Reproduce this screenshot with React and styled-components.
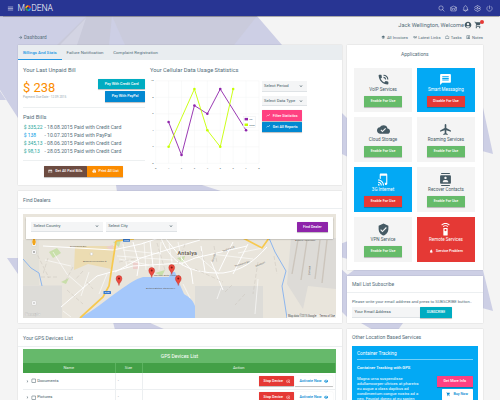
import React from "react";
import styled, { createGlobalStyle } from "styled-components";
import {
  MdMenu, MdPhoneInTalk, MdMessage, MdCloudDone, MdAirplanemodeActive, MdTapAndPlay,
  MdContacts, MdVerifiedUser, MdSettingsRemote, MdAccountCircle, MdShoppingCart,
  MdArrowForward, MdKeyboardArrowDown, MdKeyboardArrowRight, MdCheckBoxOutlineBlank,
  MdPrint, MdCreditCard, MdShowChart, MdLayers, MdLink, MdWorkOutline, MdListAlt,
  MdHighlightOff, MdRemoveRedEye, MdNotifications,
} from "react-icons/md";
import {
  IoSearchOutline, IoMailOpenOutline, IoNotificationsOutline, IoSettingsOutline, IoPowerOutline,
} from "react-icons/io5";

const Global = createGlobalStyle`
  * { box-sizing: border-box; }
  html, body { margin: 0; width: 500px; height: 400px; overflow: hidden; background: #f4f4f4; }
  body { font-family: Roboto, "Liberation Sans", sans-serif; color: #546e7a; }
  svg { display: block; flex: none; }
`;

const Page = styled.div`
  position: relative;
  width: 500px;
  height: 400px;
  overflow: hidden;
  isolation: isolate;
`;
const Backdrop = styled.svg`
  position: absolute;
  inset: 0;
  z-index: -1;
`;

const Label = styled.span`
  display: block;
  white-space: nowrap;
  font-size: ${(p) => p.$size}px;
  line-height: ${(p) => p.$line || 8}px;
  font-weight: ${(p) => p.$weight || 400};
  color: ${(p) => p.$color || "inherit"};
`;

/* Header */
const TopBar = styled.header`
  display: flex;
  align-items: center;
  justify-content: space-between;
  height: 16px;
  padding: 0 7px 0 7px;
  background: #283593;
  color: #fff;
  box-shadow: 0 0.5px 1px rgba(0, 0, 0, 0.3);
`;
const Brand = styled.div`
  display: flex;
  align-items: center;
  gap: 3.6px;
`;
const Wordmark = styled.div`
  display: flex;
  align-items: center;
  font-size: 8.6px;
  line-height: 10px;
  font-weight: 300;
  letter-spacing: -0.1px;
`;
const TopIcons = styled.div`
  display: flex;
  gap: 5px;
`;
const UserArea = styled.div`
  display: flex;
  flex-direction: column;
  align-items: flex-end;
  height: 29px;
  padding: 4px 17px 0 18px;
`;
const UserRow = styled.div`
  display: flex;
  align-items: center;
  height: 10px;
  color: #455a64;
`;
const CartWrap = styled.div`
  position: relative;
  margin-left: 2px;
  padding-right: 1px;
`;
const Badge = styled.i`
  position: absolute;
  top: -1.5px;
  right: -1px;
  width: 4px;
  height: 4px;
  border-radius: 50%;
  background: #e53935;
`;
const CrumbRow = styled.div`
  display: flex;
  align-self: stretch;
  align-items: center;
  justify-content: space-between;
  height: 8px;
  margin-top: 3.5px;
`;
const Links = styled.nav`
  display: flex;
  gap: 4.8px;
`;
const IconText = styled.div`
  display: flex;
  align-items: center;
  gap: 1px;
`;

/* Columns and cards */
const Columns = styled.main`
  display: grid;
  grid-template-columns: 323.5px 135.5px;
  gap: 5.5px;
  padding-left: 18px;
`;
const Column = styled.div`
  display: flex;
  flex-direction: column;
  gap: ${(p) => p.$gap || 6}px;
`;
const Card = styled.section`
  height: ${(p) => p.$h}px;
  background: #fff;
  box-shadow: 0 0.4px 1.2px rgba(0, 0, 0, 0.2);
  overflow: hidden;
`;
const CardTitle = styled.div`
  height: 17.5px;
  padding: 4.5px 5px 0;
  border-bottom: 0.5px solid ${(p) => (p.$plain ? "transparent" : "#eceff1")};
`;
const Tabs = styled.div`
  display: flex;
  height: 15px;
  background: #e9edf0;
`;
const Tab = styled.div`
  padding: 3.8px 4.9px 0;
  border-bottom: 1px solid ${(p) => (p.$active ? "#2196e3" : "transparent")};
`;
const BillBody = styled.div`
  display: grid;
  grid-template-columns: 122px 112px 46px;
  padding: 5.5px 5px 0;
`;
const BillSummary = styled.div`
  display: flex;
  justify-content: space-between;
  height: 29.3px;
`;
const Amount = styled.div`
  padding-top: 6.6px;
`;
const Between = styled.div`
  display: flex;
  justify-content: space-between;
`;
const ButtonStack = styled.div`
  display: flex;
  flex-direction: column;
  align-items: flex-end;
  gap: ${(p) => p.$gap}px;
  padding-top: ${(p) => p.$top || 0}px;
`;
const Button = styled.button`
  display: flex;
  flex: none;
  align-items: center;
  justify-content: center;
  gap: 2.5px;
  width: ${(p) => p.$w}px;
  height: ${(p) => p.$h || 10.8}px;
  padding: 0;
  border: 0;
  border-radius: 0.5px;
  background: ${(p) => p.$bg};
  color: ${(p) => p.$fg || "#fff"};
  font: 500 ${(p) => p.$size || 3.7}px/6px Roboto, sans-serif;
  white-space: nowrap;
  box-shadow: ${(p) => (p.$flat ? "none" : "0 0.4px 0.8px rgba(0,0,0,.25)")};
`;
const Rule = styled.div`
  height: 1px;
  margin: ${(p) => p.$m};
  background: ${(p) => p.$c || "#edf0f1"};
`;
const BillList = styled.div`
  padding-top: 2px;
`;
const BillRow = styled.div`
  display: grid;
  grid-template-columns: 20.7px 1fr;
  height: 8.05px;
  padding-left: 0.7px;
`;
const BillActions = styled.div`
  display: flex;
  gap: 0.6px;
  padding: 4.5px 0 0 21px;
`;
const ChartColumn = styled.div`
  display: flex;
  flex-direction: column;
  gap: 3.6px;
  padding-left: 5px;
`;
const Filters = styled.div`
  display: flex;
  flex-direction: column;
  padding: 15.5px 0 0 4.6px;
`;
const FilterActions = styled.div`
  display: flex;
  flex-direction: column;
  gap: 0.6px;
`;
const Select = styled.div`
  display: flex;
  align-items: center;
  justify-content: space-between;
  width: ${(p) => p.$w}px;
  height: 10.8px;
  padding: 0 3px 0 2.5px;
  margin-bottom: ${(p) => p.$mb || 0}px;
  background: #f4f5f6;
  border-bottom: 0.5px solid #dfe3e6;
  color: #455a64;
`;

/* Map */
const MapFrame = styled.div`
  position: relative;
  width: 313px;
  height: 104px;
  margin: 5.5px 0 0 5px;
`;
const MapSearch = styled.div`
  position: absolute;
  top: 2.5px;
  left: 3px;
  display: flex;
  gap: 3px;
  width: 307px;
  height: 22px;
  padding: 5px 5px 0;
  background: #fff;
  box-shadow: 0 0.5px 1.5px rgba(0, 0, 0, 0.35);
`;
const PushRight = styled.div`
  margin-left: auto;
`;
const CityName = styled.text`
  font-size: 5.4px;
  font-weight: 700;
  letter-spacing: 0.2px;
  fill: #6b6458;
  stroke: #f4f1ea;
  stroke-width: 0.8px;
  paint-order: stroke;
`;

/* Devices table */
const Table = styled.div`
  width: 313px;
  margin: 2.7px 0 0 5px;
`;
const TableTitle = styled.div`
  display: flex;
  justify-content: center;
  height: 13.5px;
  padding-top: 2.4px;
  background: #66b96b;
  color: #fff;
`;
const TableRow = styled.div`
  display: grid;
  grid-template-columns: 92.5px 27px 1fr;
  height: ${(p) => (p.$head ? 10.5 : 16.5)}px;
  background: ${(p) => (p.$head ? "#43a047" : "#fff")};
  border-bottom: ${(p) => (p.$head ? "0" : "0.5px solid #eceff1")};
  color: ${(p) => (p.$head ? "#e8f5e9" : "#455a64")};
`;
const Cell = styled.div`
  display: flex;
  align-items: center;
  justify-content: ${(p) => p.$justify || "flex-start"};
  gap: 0.8px;
  padding: 0 2.3px;
  border-right: 0.5px solid ${(p) => (p.$head ? "#5cb360" : "#eceff1")};
`;

/* Applications */
const AppsTitle = styled.div`
  display: flex;
  justify-content: center;
  height: 22.5px;
  padding-top: 4.8px;
`;
const AppGrid = styled.div`
  display: grid;
  grid-template-columns: 57.5px 57.5px;
  grid-auto-rows: 44.6px;
  gap: 5.4px 5.4px;
  padding-left: 7.3px;
`;
const Tile = styled.div`
  display: flex;
  flex-direction: column;
  align-items: center;
  padding-top: 5.4px;
  background: ${(p) => p.$bg || "#f4f4f4"};
  color: ${(p) => (p.$bg ? "#fff" : "#455a64")};
`;
const TileName = styled.div`
  height: 10.2px;
  padding-top: 0.5px;
`;
const SubscribeBody = styled.div`
  padding: 4.6px 5px;
`;
const SubscribeRow = styled.div`
  display: flex;
  gap: 0.5px;
  padding-top: 1.2px;
`;
const TrackBox = styled.div`
  width: 125.5px;
  height: 80px;
  margin: -0.6px 0 0 5px;
  padding: 4.4px 5px;
  background: #03a9f4;
  color: #fff;
`;
const TrackText = styled.p`
  margin: 0;
  padding-top: 3.6px;
  font-size: 4.1px;
  line-height: 5px;
  white-space: nowrap;
`;

const slate = "#455a64";

function Background() {
  return (
    <Backdrop width="500" height="400" viewBox="0 0 500 400">
      <path d="M0 16H257L282 45V60H18V118L0 90Z" fill="#cdcfe5" />
      <path d="M87 16H112L109 45H57Z" fill="#c9cada" />
      <path d="M112 16H257L234 45H125Z" fill="#cacbdc" />
      <path d="M60 45L86 18L77 45Z" fill="#d3d4e3" />
      <path d="M0 91L6 100H0ZM7 258H20V277ZM116 185H202L224 192H117ZM113 322H148L166 330H115Z" fill="#cdcfe5" />
      <path d="M340 111L348 119V157L340 153ZM340 244L348 241V259L340 257ZM340 268L348 275V318L340 310Z" fill="#cdcfe5" />
      <path d="M482 103L493 154L482 151ZM482 266L493 311L482 308ZM354 270H483V276H346ZM361 323H403L398 330H373Z" fill="#cdcfe5" />
    </Backdrop>
  );
}

function LogoRing() {
  return (
    <svg width="6.2" height="8" viewBox="0 0 12 15" fill="none" strokeWidth="3">
      <path d="M2 8A4.2 4.2 0 0 1 6 3.5" stroke="#ffb300" />
      <path d="M6 3.5A4.2 4.2 0 0 1 10.2 8" stroke="#e53935" />
      <path d="M10.2 8A4.2 4.2 0 0 1 6 12" stroke="#03a9f4" />
      <path d="M6 12A4.2 4.2 0 0 1 2 8" stroke="#43a047" />
    </svg>
  );
}

const px = (x) => 5.7 + x * 12.91;
const py = (y) => 86.3 - y * 8.25;
const series = [
  { color: "#8e24aa", points: [[1, 5], [2, 1], [3, 7], [4, 6], [5, 9], [7, 4]] },
  { color: "#c6ff00", points: [[1, 2], [3, 9], [4, 4], [5, 2], [6, 9]] },
];

function Chart() {
  return (
    <svg width="112" height="96" viewBox="0 0 112 96" fontSize="2.5" fill={slate}>
      {[0, 1, 2, 3, 4, 5, 6, 7, 8].map((x) => (
        <g key={x}>
          <path d={`M${px(x)} 3.8V86.3`} stroke="#f3f4f5" strokeWidth=".5" />
          <text x={px(x)} y="91.5" textAnchor="middle">{x}</text>
        </g>
      ))}
      {[0, 2, 4, 6, 8, 10].map((y) => (
        <g key={y}>
          <path d={`M5.7 ${py(y)}H109`} stroke="#f3f4f5" strokeWidth=".5" />
          <text x="3.6" y={py(y) + 0.6} textAnchor="end">{y}</text>
        </g>
      ))}
      {series.map((s) => (
        <g key={s.color} fill={s.color}>
          <polyline points={s.points.map(([x, y]) => `${px(x)},${py(y)}`).join(" ")} fill="none" stroke={s.color} strokeWidth=".9" />
          {s.points.map(([x, y]) => <circle key={x} cx={px(x)} cy={py(y)} r="1.3" />)}
        </g>
      ))}
      <rect x="93.2" y="39.4" width="12.6" height="10.8" fill="#fff" fillOpacity=".85" stroke="#e4e7e9" strokeWidth=".4" />
      <rect x="94.6" y="40.9" width="3.4" height="2.5" fill="#8e24aa" />
      <rect x="94.6" y="46.5" width="3.4" height="2.5" fill="#c6ff00" />
      <text x="99.3" y="43">3G</text>
      <text x="99.3" y="48.6">GSM</text>
    </svg>
  );
}

const pins = [[96, 71.5], [128.7, 63.5], [148.7, 60.5], [155.3, 71.5]];

function DealerMap() {
  return (
    <svg width="313" height="104" viewBox="0 0 313 104" fill="none">
      <rect width="313" height="104" fill="#e9e5dc" />
      <path d="M0 71.5H39V104H0ZM172 72H240V104H172Z" fill="#dddcd8" />
      <path d="M0 26H16V71H0Z" fill="#dedcd5" opacity=".6" />
      <path d="M268 24H313V75L285 72L280 95L264 70Z" fill="#dddbd7" />
      <path d="M52 32H92L88 55L65 50L51 56Z" fill="#ecdcb2" />
      <path d="M26 38L34 34L38 39L30 44ZM154 44L162 42L160 49ZM38 68L46 64L43 70ZM90 28L98 26L96 33ZM132 59L142 56L139 62Z" fill="#c9dfaa" />
      <path d="M83 33L90 31L89 37ZM110 48H115V55H110Z" fill="#eccfcb" />
      <path d="M56 104C72 96 80 88 97 76C106 70 112 65 120 63L146 63L148 58H152L157 71L161 80C166 83 170 86 172 92V104Z" fill="#a5c8fb" />
      <g stroke="#fff" strokeWidth="1">
        <path d="M38 93L60 74L74 62L110 52L160 49L172 44L224 32" />
        <path d="M138 24C146 44 160 60 200 59C220 56 230 48 244 33" />
        <path d="M20 32L90 36L118 30L136 24M92 58L118 44L150 34L177 26" />
        <path d="M110 28L116 50L114 62M127 27L131 60M143 25L168 56L170 70" />
        <path d="M178 32L182 58M188 47L200 76M210 28L196 57M225 30L210 60" />
        <path d="M30 38L44 60L60 74M22 46L48 52M84 60L76 80M66 58L58 82M96 45L126 51M168 36L196 60M160 70L167 84" strokeWidth=".6" />
        <path d="M94 42L150 46M100 36L138 40M104 54L100 30M121 28L123 56M138 28L136 56M146 30L150 55M155 28L160 52M40 97L48 103M198 74L194 85M215 39L240 34M188 40L230 45M235 65L232 100" strokeWidth=".6" />
      </g>
      <g stroke="#c7c1b7" strokeWidth=".45" strokeDasharray="4 2">
        <path d="M12 36L26 64M18 63H34M25 44L20 60M64 68L70 75M44 76L60 90M50 53L42 68M60 57L52 66M96 48L112 45M134 29L142 56M162 30L155 50M178 37L182 49M191 32L194 49M172 55L200 68M209 71L202 78M222 80L212 91M235 48L230 80M251 42L254 60" />
      </g>
      <path d="M275 26L269 60M284 26L278 66M297 26L292 65M304 26L299 69" stroke="#ccc5bc" strokeWidth="1.4" />
      <path d="M57 104L80 83L86 72L93 27M93 27L111 25M220 24L239 34L246 24" stroke="#f7c94f" strokeWidth="1.7" />
      <path d="M0 45L8 54L16 59L19 72M246 24L252 38L263 57L259 72L264 104" stroke="#8db6ee" strokeWidth="1" />
      <g fill="#3879cc"><rect x="100" y="24.8" width="7" height="3" rx=".5" /><rect x="80.5" y="77" width="7.5" height="3" rx=".5" /></g>
      <g fontSize="2" fill="#fff"><text x="101.2" y="27.1">D400</text><text x="81.8" y="79.3">D400</text></g>
      <g fill="#696762" fontSize="2.4">
        <circle cx="68.5" cy="40" r="1.4" fill="#fff" stroke="#aaa" strokeWidth=".3" />
        <text x="60" y="48.3">Akdeniz Üniversitesi ●</text>
        <text x="131" y="62.1">Mermerli Antik Limanı ●</text>
        <text x="123" y="75">Antalya Atatürk Stadyumu ▪</text>
        <text x="272" y="27">Antalya Havalimanı</text>
        <text x="200" y="38" transform="rotate(-22 200 38)">Yeşilova Cd.</text>
        <text x="212" y="53" transform="rotate(-18 212 53)">Termessos Blv.</text>
        <text x="233" y="53" transform="rotate(-24 233 53)">Güzelyurt</text>
        <text x="190" y="48" transform="rotate(-72 190 48)">Gazi Blv.</text>
        <text x="287" y="61" transform="rotate(-88 287 61)">Çankaya</text>
        <text x="47" y="33">Dumlupınar Blv.</text>
      </g>
      <CityName x="154.5" y="41.2">Antalya</CityName>
      {pins.map(([x, y]) => (
        <g key={x} transform={`translate(${x} ${y})`}>
          <path d="M0 0C-.4-3.3-2.9-4-2.9-7A2.9 2.9 0 0 1 2.9-7C2.9-4 .4-3.3 0 0Z" fill="#ed4a3f" stroke="#b52d26" strokeWidth=".4" />
          <circle cy="-7" r="1" fill="#7e1712" />
        </g>
      ))}
      <g fill="#fff" stroke="#bbb" strokeWidth=".3"><rect x="9" y="36" width="4" height="4" rx=".6" /><rect x="9" y="87" width="4" height="4" rx=".6" /><rect x="9" y="24" width="4" height="8" /></g>
      <path d="M10 38H12M11 37V39M10 89H12" stroke="#555" strokeWidth=".5" />
      <path d="M9.8 25H12.2L12.8 28L12 31H10L9.2 28Z" fill="#f2a51a" />
      <text x="1.5" y="102" fontSize="5" fontWeight="400" fill="#f0efec" stroke="#aaa" strokeWidth=".15">Google</text>
      <rect x="264" y="100.6" width="49" height="3.4" fill="#f2f0eb" />
      <g fontSize="2.6" fill="#444"><text x="265" y="103.1">Map data ©2015 Google</text><text x="296.5" y="103.1">Terms of Use</text></g>
    </svg>
  );
}

const bills = [
  ["$ 335,22", "- 18.08.2015 Paid with Credit Card", "#26a69a"],
  ["$ 138", "- 10.07.2015 Paid with PayPal", "#039be5"],
  ["$ 345,13", "- 08.06.2015 Paid with Credit Card", "#26a69a"],
  ["$ 98,13", "- 28.05.2015 Paid with Credit Card", "#26a69a"],
];

const apps = [
  { name: "VoIP Services", Icon: MdPhoneInTalk, action: "Enable For Use", color: "#66bb6a" },
  { name: "Smart Messaging", Icon: MdMessage, action: "Disable For Use", color: "#e53935", bg: "#03a9f4" },
  { name: "Cloud Storage", Icon: MdCloudDone, action: "Enable For Use", color: "#66bb6a" },
  { name: "Roaming Services", Icon: MdAirplanemodeActive, action: "Enable For Use", color: "#66bb6a" },
  { name: "3G Internet", Icon: MdTapAndPlay, action: "Enable For Use", color: "#e53935", bg: "#03a9f4" },
  { name: "Recover Contacts", Icon: MdContacts, action: "Enable For Use", color: "#66bb6a" },
  { name: "VPN Service", Icon: MdVerifiedUser, action: "Enable For Use", color: "#66bb6a" },
  { name: "Remote Services", Icon: MdSettingsRemote, action: "Service Problem", color: "#e53935", bg: "#e53935", alert: true },
];

const links = [
  ["All Invoices", MdLayers], ["Latest Links", MdLink], ["Tasks", MdWorkOutline], ["Notes", MdListAlt],
];

export default function App() {
  return (
    <Page>
      <Global />
      <Background />
      <TopBar>
        <Brand>
          <MdMenu size={7} />
          <Wordmark><span>M</span><LogoRing /><span>DENA</span></Wordmark>
        </Brand>
        <TopIcons>
          <IoSearchOutline size={7} /><IoMailOpenOutline size={7} /><IoNotificationsOutline size={7} />
          <IoSettingsOutline size={7} /><IoPowerOutline size={7} />
        </TopIcons>
      </TopBar>
      <UserArea>
        <UserRow>
          <Label $size={5.65} $color="#546e7a">Jack Wellington, Welcome</Label>
          <MdAccountCircle size={8} />
          <CartWrap><MdShoppingCart size={8} /><Badge /></CartWrap>
        </UserRow>
        <CrumbRow>
          <IconText><MdArrowForward size={5} /><Label $size={4.7}>Dashboard</Label></IconText>
          <Links>
            {links.map(([name, Icon]) => (
              <IconText key={name}><Icon size={4.5} /><Label $size={4.15}>{name}</Label></IconText>
            ))}
          </Links>
        </CrumbRow>
      </UserArea>

      <Columns>
        <Column>
          <Card $h={140}>
            <Tabs>
              <Tab $active><Label $size={4.3} $weight={500} $color="#2196e3">Billings And Stats</Label></Tab>
              <Tab><Label $size={4.4}>Failure Notification</Label></Tab>
              <Tab><Label $size={4.4}>Complaint Registration</Label></Tab>
            </Tabs>
            <BillBody>
              <div>
                <Label $size={5.75}>Your Last Unpaid Bill</Label>
                <BillSummary>
                  <Amount>
                    <Label $size={12.9} $line={15} $color="#fb8c00">$ 238</Label>
                    <Label $size={3.1} $line={5} $color="#90a4ae">Payment Due Date - 12.09.2015</Label>
                  </Amount>
                  <ButtonStack $gap={1.8} $top={5}>
                    <Button $w={46.7} $bg="#00acc1">Pay With Credit Card</Button>
                    <Button $w={39.7} $bg="#0288d1">Pay With PayPal</Button>
                  </ButtonStack>
                </BillSummary>
                <Rule $m="4.2px 0 5px" />
                <Label $size={5.75}>Paid Bills</Label>
                <BillList>
                  {bills.map(([sum, text, color]) => (
                    <BillRow key={sum}>
                      <Label $size={4.95} $color={color}>{sum}</Label>
                      <Label $size={5.1}>{text}</Label>
                    </BillRow>
                  ))}
                </BillList>
                <Rule $m="5.3px 0 0" />
                <BillActions>
                  <Button $w={42.8} $bg="#6d4c41"><MdCreditCard size={4.5} />Get All Paid Bills</Button>
                  <Button $w={35.5} $bg="#fb8c00"><MdPrint size={4.5} />Print All List</Button>
                </BillActions>
              </div>
              <ChartColumn>
                <Label $size={5.75}>Your Cellular Data Usage Statistics</Label>
                <Chart />
              </ChartColumn>
              <Filters>
                <Select $w={45.8} $mb={3.9}><Label $size={4.2}>Select Period</Label><MdKeyboardArrowDown size={6} /></Select>
                <Select $w={45.8} $mb={3.7}><Label $size={4.2}>Select Data Type</Label><MdKeyboardArrowDown size={6} /></Select>
                <FilterActions>
                  <Button $w={40.3} $bg="#ff4081"><MdShowChart size={4.5} />Filter Statistics</Button>
                  <Button $w={40.3} $h={10.3} $bg="#0288d1"><MdShowChart size={4.5} />Get All Reports</Button>
                </FilterActions>
              </Filters>
            </BillBody>
          </Card>

          <Card $h={132}>
            <CardTitle><Label $size={5}>Find Dealers</Label></CardTitle>
            <MapFrame>
              <DealerMap />
              <MapSearch>
                <Select $w={71.7}><Label $size={4.2}>Select Country</Label><MdKeyboardArrowDown size={6} /></Select>
                <Select $w={71.7}><Label $size={4.2}>Select City</Label><MdKeyboardArrowDown size={6} /></Select>
                <PushRight><Button $w={31.5} $bg="#8e24aa">Find Dealer</Button></PushRight>
              </MapSearch>
            </MapFrame>
          </Card>

          <Card $h={90}>
            <CardTitle><Label $size={5.1}>Your GPS Devices List</Label></CardTitle>
            <Table>
              <TableTitle><Label $size={5}>GPS Devices List</Label></TableTitle>
              <TableRow $head>
                {["Name", "Size", "Action"].map((name) => (
                  <Cell key={name} $head $justify="center"><Label $size={4}>{name}</Label></Cell>
                ))}
              </TableRow>
              {["Documents", "Pictures"].map((name) => (
                <TableRow key={name}>
                  <Cell><MdKeyboardArrowRight size={4.8} /><MdCheckBoxOutlineBlank size={5.5} /><Label $size={4.2}>{name}</Label></Cell>
                  <Cell><Label $size={4}>-</Label></Cell>
                  <Cell $justify="flex-end">
                    <Button $w={35.3} $bg="#e53935">Stop Device<MdHighlightOff size={4.5} /></Button>
                    <Button $w={37.5} $bg="#fff" $fg="#0288d1">Activate Now<MdRemoveRedEye size={4.5} /></Button>
                  </Cell>
                </TableRow>
              ))}
            </Table>
          </Card>
        </Column>

        <Column $gap={5.5}>
          <Card $h={225}>
            <AppsTitle><Label $size={5}>Applications</Label></AppsTitle>
            <AppGrid>
              {apps.map(({ name, Icon, action, color, bg, alert }) => (
                <Tile key={name} $bg={bg}>
                  <Icon size={13} />
                  <TileName><Label $size={4.55}>{name}</Label></TileName>
                  <Button $w={37.7} $bg={color} $flat={alert}>{alert && <MdNotifications size={4.5} />}{action}</Button>
                </Tile>
              ))}
            </AppGrid>
          </Card>

          <Card $h={47.7}>
            <CardTitle><Label $size={5}>Mail List Subscribe</Label></CardTitle>
            <SubscribeBody>
              <Label $size={4.15}>Please write your email address and press to SUBSCRIBE button..</Label>
              <SubscribeRow>
                <Select $w={67.5}><Label $size={4.2}>Your Email Address</Label></Select>
                <Button $w={32} $bg="#00acc1" $size={3.5}>SUBSCRIBE</Button>
              </SubscribeRow>
            </SubscribeBody>
          </Card>

          <Card $h={90}>
            <CardTitle $plain><Label $size={5.1}>Other Location Based Services</Label></CardTitle>
            <TrackBox>
              <Label $size={4.75}>Container Tracking</Label>
              <Rule $m="1px 0 4.2px" $c="rgba(255,255,255,.45)" />
              <Label $size={4.2} $weight={500}>Container Tracking with GPS</Label>
              <Between>
                <TrackText>
                  Magna urna suspendisse<br />adullamcorper ultrices at pharetra<br />eu augue a class dapibus ad<br />
                  condimentum congue nostra ad a<br />nec. Feugiat donec at eu sapien
                </TrackText>
                <ButtonStack $gap={2.4} $top={3.7}>
                  <Button $w={35.3} $bg="#ff4081">Get More Info</Button>
                  <Button $w={30.7} $bg="#fff" $fg="#0288d1"><MdShoppingCart size={4.5} />Buy Now</Button>
                </ButtonStack>
              </Between>
            </TrackBox>
          </Card>
        </Column>
      </Columns>
    </Page>
  );
}
